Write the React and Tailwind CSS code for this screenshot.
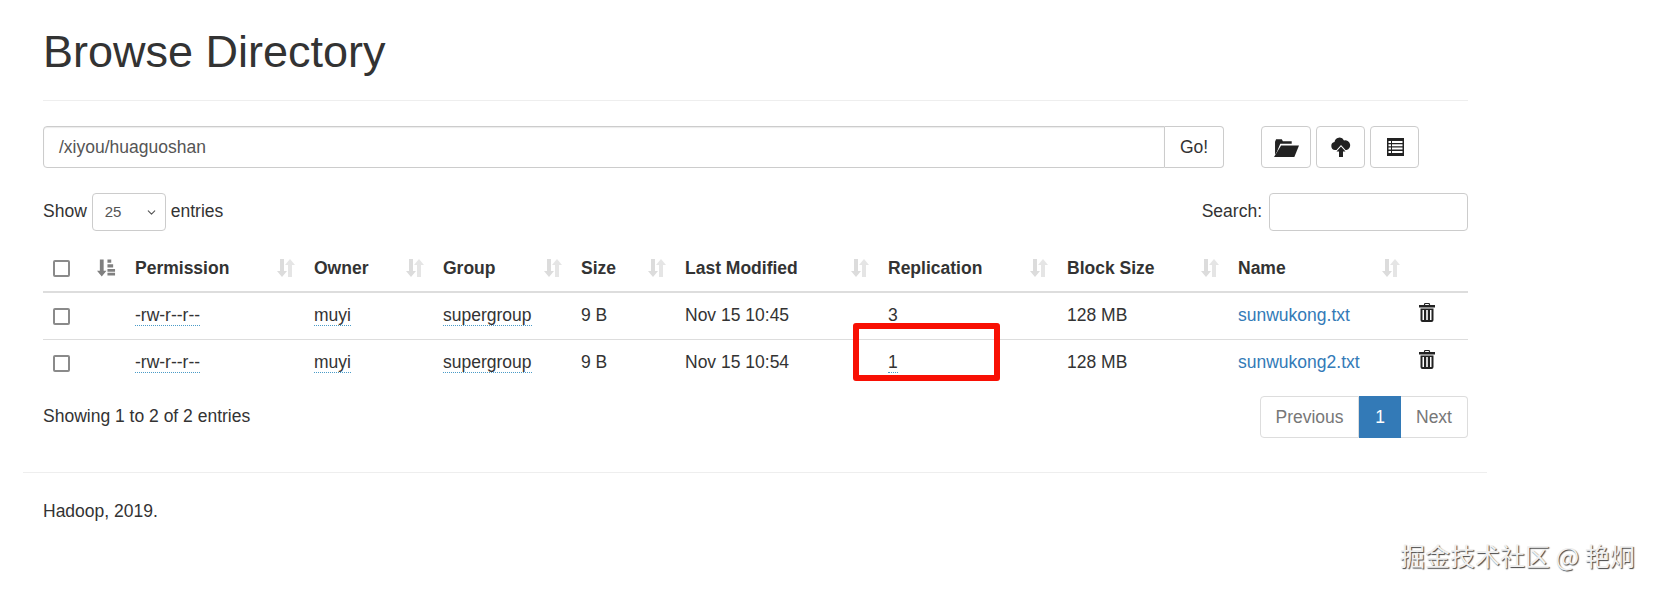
import React from "react";
import { ChevronDown } from "lucide-react";

const FONT = { fontFamily: '"Liberation Sans", Arial, sans-serif' };

const columns = [
  { label: "Permission", width: "w-[179px]" },
  { label: "Owner", width: "w-[129px]" },
  { label: "Group", width: "w-[138px]" },
  { label: "Size", width: "w-[104px]" },
  { label: "Last Modified", width: "w-[203px]" },
  { label: "Replication", width: "w-[179px]" },
  { label: "Block Size", width: "w-[171px]" },
  { label: "Name", width: "w-[181px]" },
];

const files = [
  { modified: "Nov 15 10:45", replication: "3", name: "sunwukong.txt" },
  { modified: "Nov 15 10:54", replication: "1", name: "sunwukong2.txt" },
];

function SortIcon({ className = "" }) {
  return (
    <svg viewBox="0 0 18 20" className={`h-[20px] w-[18px] ${className}`} fill="currentColor">
      <path d="M3 1h4v12h3l-5 6-5-6h3z" />
      <path d="M13 1l5 6h-3v12h-4V7H8z" opacity="0.75" />
    </svg>
  );
}

function SortActiveIcon() {
  return (
    <svg viewBox="0 0 20 20" className="h-[20px] w-[19px] text-[#808080]" fill="currentColor">
      <path d="M3 1h4v12h3l-5 6-5-6h3z" />
      <path d="M11 1h4v3.500h-4zM11 6h6v3.500h-6zM11 11h8v3h-8zM11 15h8v3h-8z" />
    </svg>
  );
}

function FolderOpenIcon() {
  return (
    <svg viewBox="0 0 24 18" className="h-[19px] w-[25px] text-[#222]" fill="currentColor">
      <path d="M1 3.500 2 1h5.500l1 2H17v2.500H6L2.800 13 1 16z" />
      <path d="M6.800 7H24l-4.500 11H0z" />
    </svg>
  );
}

function CloudUploadIcon() {
  return (
    <svg viewBox="0 0 20 20" className="h-[20px] w-[20px] text-[#222]" fill="currentColor">
      <path d="M5.500 13H4a4 4 0 0 1-.5-7.900A5 5 0 0 1 13 3.500 4.500 4.500 0 0 1 15.500 13H14.500L10 8z" />
      <path d="M10 9.500 14.500 14.500H12V20H8v-5.500H5.500z" />
    </svg>
  );
}

function ListIcon() {
  return (
    <svg viewBox="0 0 17 18" className="ml-[2px] h-[18px] w-[17px] text-[#222]">
      <path fill="currentColor" d="M0 0h17v18H0z" />
      <path
        fill="#fff"
        d="M1.500 3h2.500v2H1.500zM5 3h10.500v2H5zM1.500 6.300h2.500v2H1.500zM5 6.300h10.500v2H5zM1.500 9.600h2.500v2H1.500zM5 9.600h10.500v2H5zM1.500 12.900h2.500v2H1.500zM5 12.900h10.500v2H5z"
      />
    </svg>
  );
}

function TrashIcon() {
  return (
    <svg viewBox="0 0 16 19" className="h-[19px] w-[16px] text-[#222]" fill="currentColor">
      <path d="M5.500 0h5l.7 2H16v2.500H0V2h4.800zM6.300 1 6 2h4l-.3-1z" fillRule="evenodd" />
      <path
        d="M1.500 5.500h13V17a2 2 0 0 1-2 2h-9a2 2 0 0 1-2-2zM3.500 7v10h1.500V7zM7.200 7v10h1.600V7zM11 7v10h1.500V7z"
        fillRule="evenodd"
      />
    </svg>
  );
}

function Check() {
  return <span className="block h-[17px] w-[17px] rounded-[2px] border-2 border-[#8a8a8a] bg-white" />;
}

function Dotted({ children }) {
  return <span className="border-b border-dotted border-[#4a9bc7]">{children}</span>;
}

export default function App() {
  return (
    <div className="relative h-[592px] w-[1654px] overflow-hidden bg-white text-[17.500px] text-[#333]" style={FONT}>
      <div className="ml-[23px] w-[1464px]">
        <div className="pr-[19px] pl-5">
          <div className="h-[101px] border-b border-[#eee] pt-[25px]">
            <h1 className="text-[45px] leading-[54px] font-normal">Browse Directory</h1>
          </div>

          {/* Path bar */}
          <div className="mt-[25px] flex items-start">
            <div className="flex h-[42px] w-[1181px]">
              <div className="flex flex-1 items-center rounded-l-[4px] border border-[#ccc] px-[15px] text-[#555] shadow-[inset_0_1px_1px_rgba(0,0,0,0.08)]">
                /xiyou/huaguoshan
              </div>
              <button className="w-[59px] rounded-r-[4px] border border-l-0 border-[#ccc] bg-white">Go!</button>
            </div>
            <div className="ml-[37px] flex gap-[5px]">
              <button className="flex h-[42px] w-[50px] items-center justify-center rounded-[4px] border border-[#ccc]">
                <FolderOpenIcon />
              </button>
              <button className="flex h-[42px] w-[49px] items-center justify-center rounded-[4px] border border-[#ccc]">
                <CloudUploadIcon />
              </button>
              <button className="flex h-[42px] w-[49px] items-center justify-center rounded-[4px] border border-[#ccc]">
                <ListIcon />
              </button>
            </div>
          </div>

          {/* Table controls */}
          <div className="mt-[25px] flex h-[38px] items-center justify-between">
            <div className="flex items-center">
              <span className="-mt-px">Show</span>
              <div className="relative mx-[5px] flex h-[38px] w-[74px] items-center rounded-[4px] border border-[#ccc] pl-[12px] text-[15px] text-[#555]">
                25
                <ChevronDown className="absolute right-[7px] h-[13px] w-[13px]" strokeWidth={2} />
              </div>
              <span className="-mt-px">entries</span>
            </div>
            <div className="flex items-center">
              <span className="-mt-px">Search:</span>
              <div className="ml-[7px] h-[38px] w-[199px] rounded-[4px] border border-[#ccc]" />
            </div>
          </div>

          {/* File table */}
          <table className="mt-[14px] w-full table-fixed border-collapse">
            <thead>
              <tr className="h-[47px] border-b-2 border-[#ddd]">
                <th className="w-[44px] pl-[10px]">
                  <Check />
                </th>
                <th className="w-[48px] pl-[10px]">
                  <SortActiveIcon />
                </th>
                {columns.map((c) => (
                  <th key={c.label} className={`${c.width} text-left font-bold`}>
                    <div className="flex items-center justify-between pr-[19px]">
                      <span>{c.label}</span>
                      <SortIcon className="text-[#dcdcdc]" />
                    </div>
                  </th>
                ))}
                <th />
              </tr>
            </thead>
            <tbody>
              {files.map((f) => (
                <tr key={f.name} className="h-[47.500px] border-b border-[#ddd] last:border-b-0 [&>td:nth-child(n+3)]:pb-[2px]">
                  <td className="pl-[10px]">
                    <Check />
                  </td>
                  <td />
                  <td>
                    <Dotted>-rw-r--r--</Dotted>
                  </td>
                  <td>
                    <Dotted>muyi</Dotted>
                  </td>
                  <td>
                    <Dotted>supergroup</Dotted>
                  </td>
                  <td>9 B</td>
                  <td>{f.modified}</td>
                  <td>
                    <Dotted>{f.replication}</Dotted>
                  </td>
                  <td>128 MB</td>
                  <td>
                    <a className="text-[#337ab7]">{f.name}</a>
                  </td>
                  <td className="align-top pt-[10px]">
                    <TrashIcon />
                  </td>
                </tr>
              ))}
            </tbody>
          </table>

          {/* Table footer */}
          <div className="mt-[9px] flex items-start justify-between">
            <span className="mt-[7px]">Showing 1 to 2 of 2 entries</span>
            <div className="flex h-[42px] text-[#777]">
              <span className="flex w-[99px] items-center justify-center rounded-l-[4px] border border-[#ddd]">Previous</span>
              <span className="flex w-[42px] items-center justify-center bg-[#337ab7] text-white">1</span>
              <span className="flex w-[67px] items-center justify-center rounded-r-[4px] border border-l-0 border-[#ddd]">Next</span>
            </div>
          </div>
        </div>

        <div className="mt-[34px] border-t border-[#eee] px-5 pt-[25px]">Hadoop, 2019.</div>
      </div>

      {/* Annotation and watermark painted over the page */}
      <div className="absolute top-[323px] left-[853px] h-[58px] w-[147px] rounded-[3px] border-[6px] border-[#f81004]" />
      <div
        className="absolute top-[538px] left-[1400px] text-[25px] leading-[34px] whitespace-nowrap text-[#f0f0f0] [text-shadow:1px_1px_1px_#444]"
        style={{ fontFamily: '"Noto Sans CJK SC", "Liberation Sans", sans-serif' }}
      >
        掘金技术社区 @ 艳炯
      </div>
    </div>
  );
}
